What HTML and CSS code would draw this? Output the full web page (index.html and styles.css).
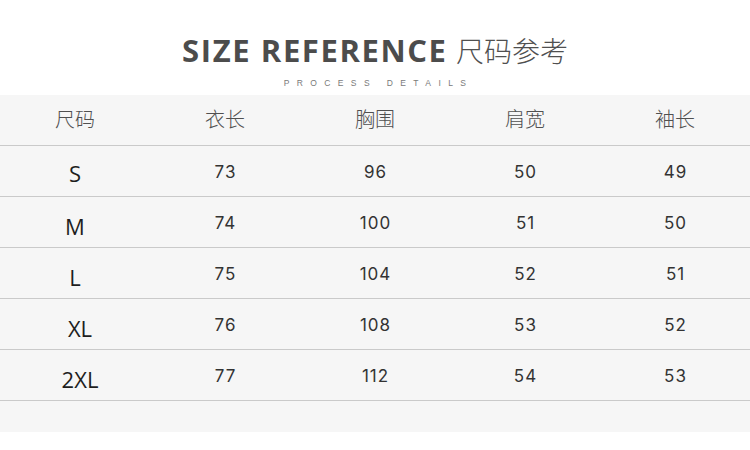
FILE: index.html
```html
<!DOCTYPE html>
<html lang="zh">
<head>
<meta charset="utf-8">
<title>SIZE REFERENCE 尺码参考</title>
<link rel="stylesheet" href="styles.css">
</head>
<body>
<header class="head">
  <h1 class="title"><span class="title-en">SIZE REFERENCE</span> <span class="title-cn">尺码参考</span></h1>
  <p class="sub">PROCESS DETAILS</p>
</header>
<section class="table">
  <div class="row row-head">
    <div class="cell">尺码</div>
    <div class="cell">衣长</div>
    <div class="cell">胸围</div>
    <div class="cell">肩宽</div>
    <div class="cell">袖长</div>
  </div>
  <div class="row">
    <div class="cell size size-high">S</div>
    <div class="cell num">73</div>
    <div class="cell num">96</div>
    <div class="cell num">50</div>
    <div class="cell num">49</div>
  </div>
  <div class="row">
    <div class="cell size">M</div>
    <div class="cell num">74</div>
    <div class="cell num">100</div>
    <div class="cell num">51</div>
    <div class="cell num">50</div>
  </div>
  <div class="row">
    <div class="cell size">L</div>
    <div class="cell num">75</div>
    <div class="cell num">104</div>
    <div class="cell num">52</div>
    <div class="cell num">51</div>
  </div>
  <div class="row">
    <div class="cell size size-shift">XL</div>
    <div class="cell num">76</div>
    <div class="cell num">108</div>
    <div class="cell num">53</div>
    <div class="cell num">52</div>
  </div>
  <div class="row">
    <div class="cell size size-shift">2XL</div>
    <div class="cell num">77</div>
    <div class="cell num">112</div>
    <div class="cell num">54</div>
    <div class="cell num">53</div>
  </div>
  <div class="filler"></div>
</section>
</body>
</html>
```
FILE: styles.css
```css
* { box-sizing: border-box; }
html, body {
  margin: 0;
  padding: 0;
  background: #ffffff;
}
body {
  width: 750px;
  height: 450px;
  overflow: hidden;
  font-family: "Open Sans", "Noto Sans CJK SC", sans-serif;
}
.head {
  height: 95px;
  padding-top: 32px;
  display: flex;
  flex-direction: column;
  align-items: center;
}
.title {
  margin: 0;
  line-height: 36px;
  height: 36px;
  white-space: nowrap;
  color: #4c4c4c;
}
.title-en {
  font-family: "Open Sans", sans-serif;
  font-weight: 700;
  font-size: 31px;
  letter-spacing: 1.6px;
}
.title-cn {
  font-family: "Noto Sans CJK SC", sans-serif;
  font-weight: 300;
  font-size: 28px;
  color: #505050;
}
.sub {
  margin: 10px 0 0;
  font-family: "Liberation Sans", sans-serif;
  font-size: 8.5px;
  line-height: 10px;
  letter-spacing: 7.4px;
  margin-right: -7px;
  color: #7a7a7a;
}
.table {
  background: #f6f6f6;
}
.row {
  display: grid;
  grid-template-columns: repeat(5, 150px);
  height: 51px;
  border-bottom: 1px solid #cacaca;
}
.cell {
  display: flex;
  align-items: center;
  justify-content: center;
}
.row-head .cell {
  font-family: "Noto Sans CJK SC", sans-serif;
  font-weight: 300;
  font-size: 20px;
  color: #505050;
  padding-bottom: 4px;
}
.num {
  font-family: "Inter", "Liberation Sans", sans-serif;
  font-weight: 400;
  font-size: 17px;
  letter-spacing: 1px;
  color: #333333;
  padding-top: 2px;
  padding-left: 1px;
}
.size {
  font-family: "Open Sans", sans-serif;
  font-size: 22px;
  color: #1e1e1e;
  padding-top: 7px;
}
.size-high {
  padding-top: 3px;
}
.size-shift {
  padding-left: 10px;
}
.filler {
  height: 31px;
}
```
